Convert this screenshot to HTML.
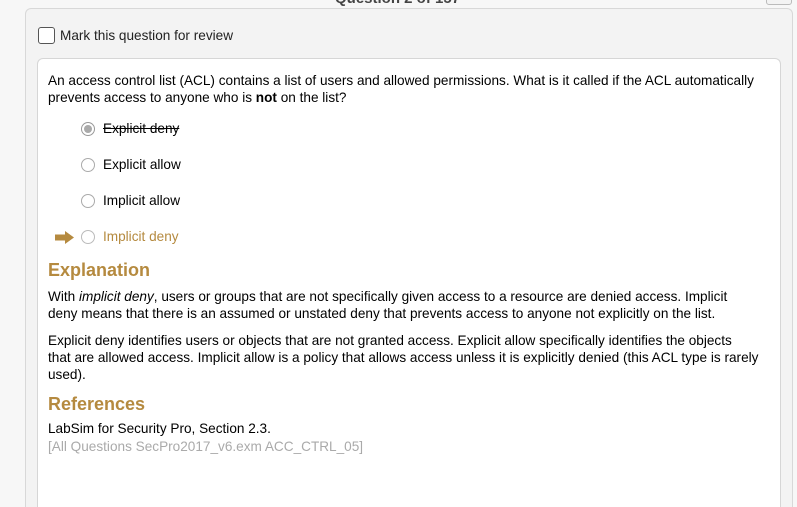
<!DOCTYPE html>
<html><head><style>
html,body{margin:0;width:797px;height:507px;overflow:hidden}
body{background:#f7f7f7;font-family:"Liberation Sans",sans-serif;font-size:13.6px;color:#000;position:relative}
.a{position:absolute;white-space:nowrap}
#outer{position:absolute;left:25px;top:8px;width:766px;height:499px;background:#f3f3f3;border:1px solid #d8d8d8;border-bottom:none;border-radius:6px 6px 0 0}
#inner{position:absolute;left:37px;top:58px;width:742px;height:449px;background:#fff;border:1px solid #d6d6d6;border-bottom:none;border-radius:6px 6px 0 0}
.cb{position:absolute;left:38px;top:27px;width:15px;height:15px;border:1px solid #555;border-radius:3px;background:#fff}
.r{position:absolute;width:14px;height:14px;border:1px solid #aaa;border-radius:50%;background:#fff;box-sizing:border-box}
.gold{color:#b58a3f}
h{font-weight:bold;font-size:18px;color:#b58a3f;position:absolute}
</style></head><body>
<div class="a" style="left:335px;top:-10px;font-weight:bold;font-size:15px;color:#444">Question 2 of 157</div>
<div style="position:absolute;left:766px;top:-6px;width:24px;height:9px;border:1px solid #bbb;border-radius:3px;background:#f3f3f3"></div>
<div id="outer"></div>
<div class="cb"></div>
<div class="a" style="left:60px;top:28px;color:#222">Mark this question for review</div>
<div id="inner"></div>
<div class="a" style="left:48px;top:72px;line-height:17px">An access control list (ACL) contains a list of users and allowed permissions. What is it called if the ACL automatically<br>prevents access to anyone who is <b>not</b> on the list?</div>
<div class="r" style="left:81px;top:122px;border-color:#999"><div style="position:absolute;left:2px;top:2px;width:8px;height:8px;border-radius:50%;background:#aaa"></div></div>
<div class="a" style="left:103px;top:121px;text-decoration:line-through">Explicit deny</div>
<div class="r" style="left:81px;top:158px"></div>
<div class="a" style="left:103px;top:157px">Explicit allow</div>
<div class="r" style="left:81px;top:194px"></div>
<div class="a" style="left:103px;top:193px">Implicit allow</div>
<svg style="position:absolute;left:55px;top:231px" width="20" height="13"><path d="M0 3.5H10V0L19 6.5L10 13V9.5H0Z" fill="#b58a3f"/></svg>
<div class="r" style="left:81px;top:230px;border-color:#bbb"></div>
<div class="a gold" style="left:103px;top:229px">Implicit deny</div>
<h style="left:48px;top:260px">Explanation</h>
<div class="a" style="left:48px;top:288px;line-height:17px">With <i>implicit deny</i>, users or groups that are not specifically given access to a resource are denied access. Implicit<br>deny means that there is an assumed or unstated deny that prevents access to anyone not explicitly on the list.</div>
<div class="a" style="left:48px;top:332px;line-height:17px">Explicit deny identifies users or objects that are not granted access. Explicit allow specifically identifies the objects<br>that are allowed access. Implicit allow is a policy that allows access unless it is explicitly denied (this ACL type is rarely<br>used).</div>
<h style="left:48px;top:394px">References</h>
<div class="a" style="left:48px;top:421px">LabSim for Security Pro, Section 2.3.</div>
<div class="a" style="left:48px;top:439px;color:#aaa">[All Questions SecPro2017_v6.exm ACC_CTRL_05]</div>
</body></html>
